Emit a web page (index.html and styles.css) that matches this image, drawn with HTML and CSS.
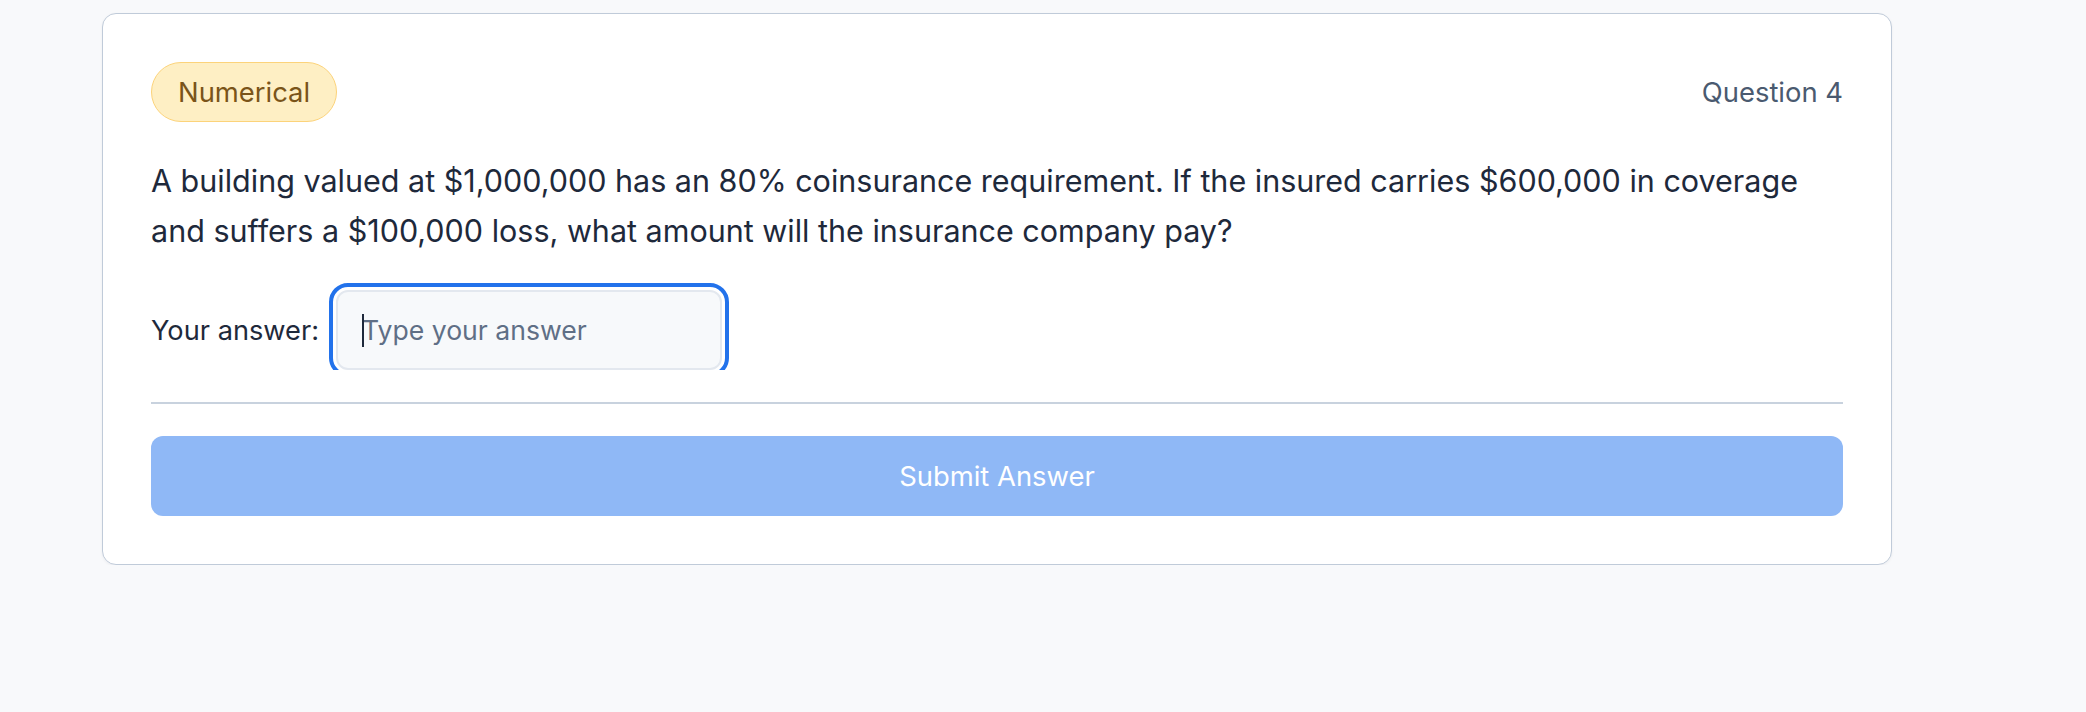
FILE: index.html
```html
<!DOCTYPE html>
<html lang="en">
<head>
<meta charset="utf-8">
<title>Question 4</title>
<link rel="stylesheet" href="styles.css">
</head>
<body>
<div class="page">
  <section class="card">
    <header class="card-head">
      <span class="badge">Numerical</span>
      <span class="qnum">Question 4</span>
    </header>
    <p class="question">A building valued at $1,000,000 has an 80% coinsurance requirement. If the insured carries $600,000 in coverage and suffers a $100,000 loss, what amount will the insurance company pay?</p>
    <div class="answer-row">
      <label class="answer-label" for="answer">Your answer:</label>
      <div class="field-wrap">
        <input id="answer" class="field" type="text" placeholder="Type your answer">
        <span class="caret"></span>
      </div>
    </div>
    <hr class="divider">
    <button class="submit" type="button" disabled>Submit Answer</button>
  </section>
</div>
</body>
</html>
```
FILE: styles.css
```css
html, body {
  margin: 0;
  padding: 0;
}
body {
  background: #f8f9fb;
  font-family: Inter, "Noto Sans", "Liberation Sans", sans-serif;
  color: #1e293b;
}
.page {
  padding: 13px 0 0 102px;
}
.card {
  box-sizing: border-box;
  width: 1790px;
  background: #ffffff;
  border: 1.5px solid #c0cbd9;
  border-radius: 14px;
  padding: 48px 48px 48.5px;
  box-shadow: 0 1px 3px rgba(15, 23, 42, 0.05);
}
.card-head {
  display: flex;
  justify-content: space-between;
  align-items: center;
  height: 60px;
}
.badge {
  box-sizing: border-box;
  display: inline-flex;
  align-items: center;
  height: 60px;
  padding: 0 26px;
  border: 1.5px solid #fcd37a;
  border-radius: 999px;
  background: #feefc4;
  color: #7a5419;
  font-size: 27.4px;
}
.qnum {
  font-size: 27.4px;
  color: #4a5a70;
}
.question {
  margin: 33.5px 0 0;
  font-size: 30.5px;
  line-height: 50.6px;
  color: #1e293b;
}
.answer-row {
  display: flex;
  align-items: baseline;
  margin-top: 25px;
}
.answer-label {
  font-size: 27.2px;
  color: #1e293b;
  margin-right: 9px;
}
.field-wrap {
  position: relative;
  overflow: hidden;
  padding: 8px 10px 0 8px;
}
.field {
  display: block;
  box-sizing: border-box;
  width: 386px;
  height: 80px;
  padding: 0 0 0 24px;
  border: 2px solid #e3e8ef;
  border-radius: 12px;
  background: #f7f9fb;
  font-family: inherit;
  font-size: 26.6px;
  color: #1e293b;
  outline: 4px solid #2272eb;
  outline-offset: 3px;
}
.field::placeholder {
  color: #5f6f86;
  opacity: 1;
}
.caret {
  position: absolute;
  left: 34px;
  top: 32px;
  width: 2px;
  height: 33px;
  background: #1e293b;
}
.divider {
  height: 2px;
  margin: 32px 0 0;
  border: 0;
  background: #c8d2de;
}
.submit {
  display: flex;
  align-items: center;
  justify-content: center;
  width: 100%;
  height: 80px;
  margin-top: 32px;
  border: 0;
  border-radius: 12px;
  background: #8fb8f6;
  color: #ffffff;
  font-family: inherit;
  font-size: 27.4px;
}
```
